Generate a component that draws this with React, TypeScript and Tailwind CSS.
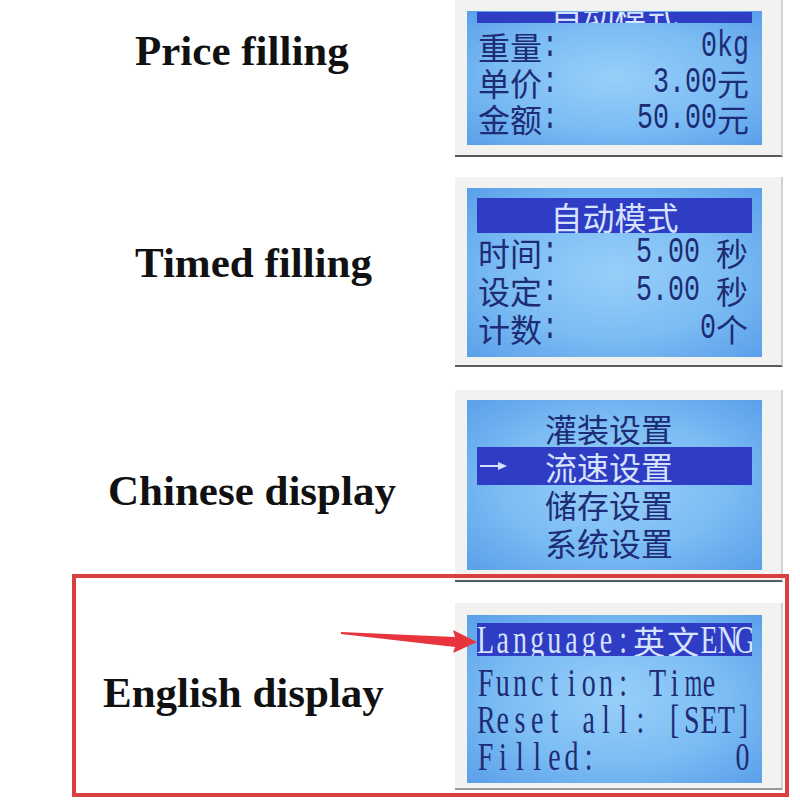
import React from "react";

const LCD =
  "bg-[radial-gradient(ellipse_at_center,#98cff9_0%,#7bbcf4_55%,#5a9fe9_100%)]";
const CJK = "font-['Noto_Sans_CJK_SC',sans-serif] font-normal";
const MONO = "font-['Liberation_Mono','Noto_Sans_CJK_SC',monospace]";
const SERIF = "font-['Liberation_Serif',serif]";
const LABEL =
  "font-['Liberation_Serif',serif] font-bold text-[43px] leading-none text-[#111] whitespace-nowrap";
const INK = "text-[#1d2c74]";
const LIGHT = "text-[#d6e3ff]";
const BAR = "bg-[#2e3dc4]";

function Cn({ children, cls = "" }: { children: React.ReactNode; cls?: string }) {
  return (
    <span className={`${CJK} text-[32px] leading-none inline-block whitespace-nowrap ${cls}`}>
      {children}
    </span>
  );
}

function Dg({ children }: { children: React.ReactNode }) {
  return (
    <span
      className={`${MONO} text-[26.67px] leading-none inline-block scale-y-[1.4] whitespace-pre`}
    >
      {children}
    </span>
  );
}

function Row36({ label, value }: { label: string; value: React.ReactNode }) {
  return (
    <div className={`h-[36px] flex items-center justify-between pl-[1px] pr-[3px] ${INK}`}>
      <div className="flex items-center">
        <Cn>{label}</Cn>
        <Dg>:</Dg>
      </div>
      <div className="flex items-center">{value}</div>
    </div>
  );
}

function Row38({ label, value }: { label: string; value: React.ReactNode }) {
  return (
    <div className={`h-[38px] flex items-center justify-between pl-[1px] pr-[4px] ${INK}`}>
      <div className="flex items-center">
        <Cn>{label}</Cn>
        <Dg>:</Dg>
      </div>
      <div className="flex items-center">{value}</div>
    </div>
  );
}

/* LCD serif text laid out in fixed half-width cells */
function En({ text }: { text: string }) {
  return (
    <span className={`${SERIF} text-[28px] leading-none inline-flex shrink-0 scale-y-[1.45]`}>
      {Array.from(text).map((c, i) => (
        <span
          key={i}
          className={`inline-block w-[17.2px] text-center shrink-0 ${
            /[mwMW]/.test(c) ? "scale-x-[0.8]" : ""
          }`}
        >
          {c === " " ? "\u00a0" : c}
        </span>
      ))}
    </span>
  );
}

function EnCn({ text }: { text: string }) {
  return (
    <span className="inline-flex shrink-0">
      {Array.from(text).map((c, i) => (
        <span
          key={i}
          className={`${CJK} text-[32px] leading-none inline-block w-[34.4px] text-center shrink-0`}
        >
          {c}
        </span>
      ))}
    </span>
  );
}

function MenuArrow() {
  return (
    <svg width="27" height="10" viewBox="0 0 27 10" className="shrink-0">
      <line x1="0" y1="5" x2="22" y2="5" stroke="#d6e3ff" strokeWidth="2" />
      <polygon points="18,1 27,5 18,9" fill="#d6e3ff" />
    </svg>
  );
}

export default function App() {
  return (
    <div className="relative w-[800px] h-[800px] bg-white overflow-hidden">
      <div className="flex flex-col">
        {/* Row 1 */}
        <div className="flex h-[157px]">
          <div className="w-[455px] pl-[135px] pt-[29px]">
            <span className={LABEL}>Price filling</span>
          </div>
          <div className="w-[328px] h-[157px] bg-[#f2f2f0] border-b-2 border-r-2 border-b-[#5a5a5a] border-r-[#d2d2d2] pt-[11px] pl-[12px]">
            <div className={`w-[295px] h-[134px] ${LCD} px-[10px] pt-[1px]`}>
              <div className={`h-[11px] ${BAR} overflow-hidden flex items-end justify-center`}>
                <Cn cls={`${LIGHT} translate-y-[6px]`}>自动模式</Cn>
              </div>
              <div className="mt-[5px]">
                <Row36 label="重量" value={<Dg>0kg</Dg>} />
                <Row36
                  label="单价"
                  value={
                    <>
                      <Dg>3.00</Dg>
                      <Cn>元</Cn>
                    </>
                  }
                />
                <Row36
                  label="金额"
                  value={
                    <>
                      <Dg>50.00</Dg>
                      <Cn>元</Cn>
                    </>
                  }
                />
              </div>
            </div>
          </div>
        </div>

        {/* Row 2 */}
        <div className="flex h-[190px] mt-[20px]">
          <div className="w-[455px] pl-[135px] pt-[64px]">
            <span className={LABEL}>Timed filling</span>
          </div>
          <div className="w-[328px] h-[190px] bg-[#f2f2f0] border-b-2 border-r-2 border-b-[#5a5a5a] border-r-[#d2d2d2] pt-[11px] pl-[12px]">
            <div className={`w-[295px] h-[169px] ${LCD} px-[10px] pt-[10px]`}>
              <div className={`h-[35px] ${BAR} flex items-center justify-center`}>
                <Cn cls={LIGHT}>自动模式</Cn>
              </div>
              <Row38
                label="时间"
                value={
                  <>
                    <Dg>5.00 </Dg>
                    <Cn>秒</Cn>
                  </>
                }
              />
              <Row38
                label="设定"
                value={
                  <>
                    <Dg>5.00 </Dg>
                    <Cn>秒</Cn>
                  </>
                }
              />
              <Row38
                label="计数"
                value={
                  <>
                    <Dg>0</Dg>
                    <Cn>个</Cn>
                  </>
                }
              />
            </div>
          </div>
        </div>

        {/* Row 3 */}
        <div className="flex h-[192px] mt-[23px]">
          <div className="w-[455px] pl-[108px] pt-[79px]">
            <span className={LABEL}>Chinese display</span>
          </div>
          <div className="w-[328px] h-[192px] bg-[#f2f2f0] border-b-2 border-r-2 border-b-[#5a5a5a] border-r-[#d2d2d2] pt-[10px] pl-[12px]">
            <div className={`w-[295px] h-[170px] ${LCD} px-[10px] pt-[9px]`}>
              <div className={`h-[38px] flex items-center pl-[68px] ${INK}`}>
                <Cn>灌装设置</Cn>
              </div>
              <div className={`h-[38px] flex items-center pl-[3px] ${BAR} ${LIGHT}`}>
                <MenuArrow />
                <Cn cls="ml-[38px]">流速设置</Cn>
              </div>
              <div className={`h-[38px] flex items-center pl-[68px] ${INK}`}>
                <Cn>储存设置</Cn>
              </div>
              <div className={`h-[38px] flex items-center pl-[68px] ${INK}`}>
                <Cn>系统设置</Cn>
              </div>
            </div>
          </div>
        </div>

        {/* Row 4 with red highlight */}
        <div className="ml-[72px] mt-[-8px] w-[717px] h-[223px] border-4 border-[#d9403f] flex">
          <div className="w-[379px] pl-[27px] pt-[93px]">
            <span className={LABEL}>English display</span>
          </div>
          <div className="mt-[25px] w-[328px] h-[187px] bg-[#f2f2f0] border-b-2 border-r-2 border-b-[#9a9a9a] border-r-[#d2d2d2] pt-[12px] pl-[12px]">
            <div className={`w-[295px] h-[168px] ${LCD} px-[10px] pt-[8px]`}>
              <div className={`h-[33px] ${BAR} ${LIGHT} flex items-center overflow-hidden`}>
                <En text="Language:" />
                <EnCn text="英文" />
                <En text="ENG" />
              </div>
              <div className={`mt-[8px] ${INK}`}>
                <div className="h-[37px] flex items-center">
                  <En text="Function: Time" />
                </div>
                <div className="h-[37px] flex items-center">
                  <En text="Reset all: [SET]" />
                </div>
                <div className="h-[37px] flex items-center justify-between pr-[1px]">
                  <En text="Filled:" />
                  <En text="0" />
                </div>
              </div>
            </div>
          </div>
        </div>
      </div>

      {/* red pointer arrow */}
      <svg
        className="absolute left-0 top-0 pointer-events-none"
        width="800"
        height="800"
        viewBox="0 0 800 800"
      >
        <polygon
          points="341,632 455,637 453,630 477,642 453,653 455,647 341,634"
          fill="#e8343c"
        />
      </svg>
    </div>
  );
}
